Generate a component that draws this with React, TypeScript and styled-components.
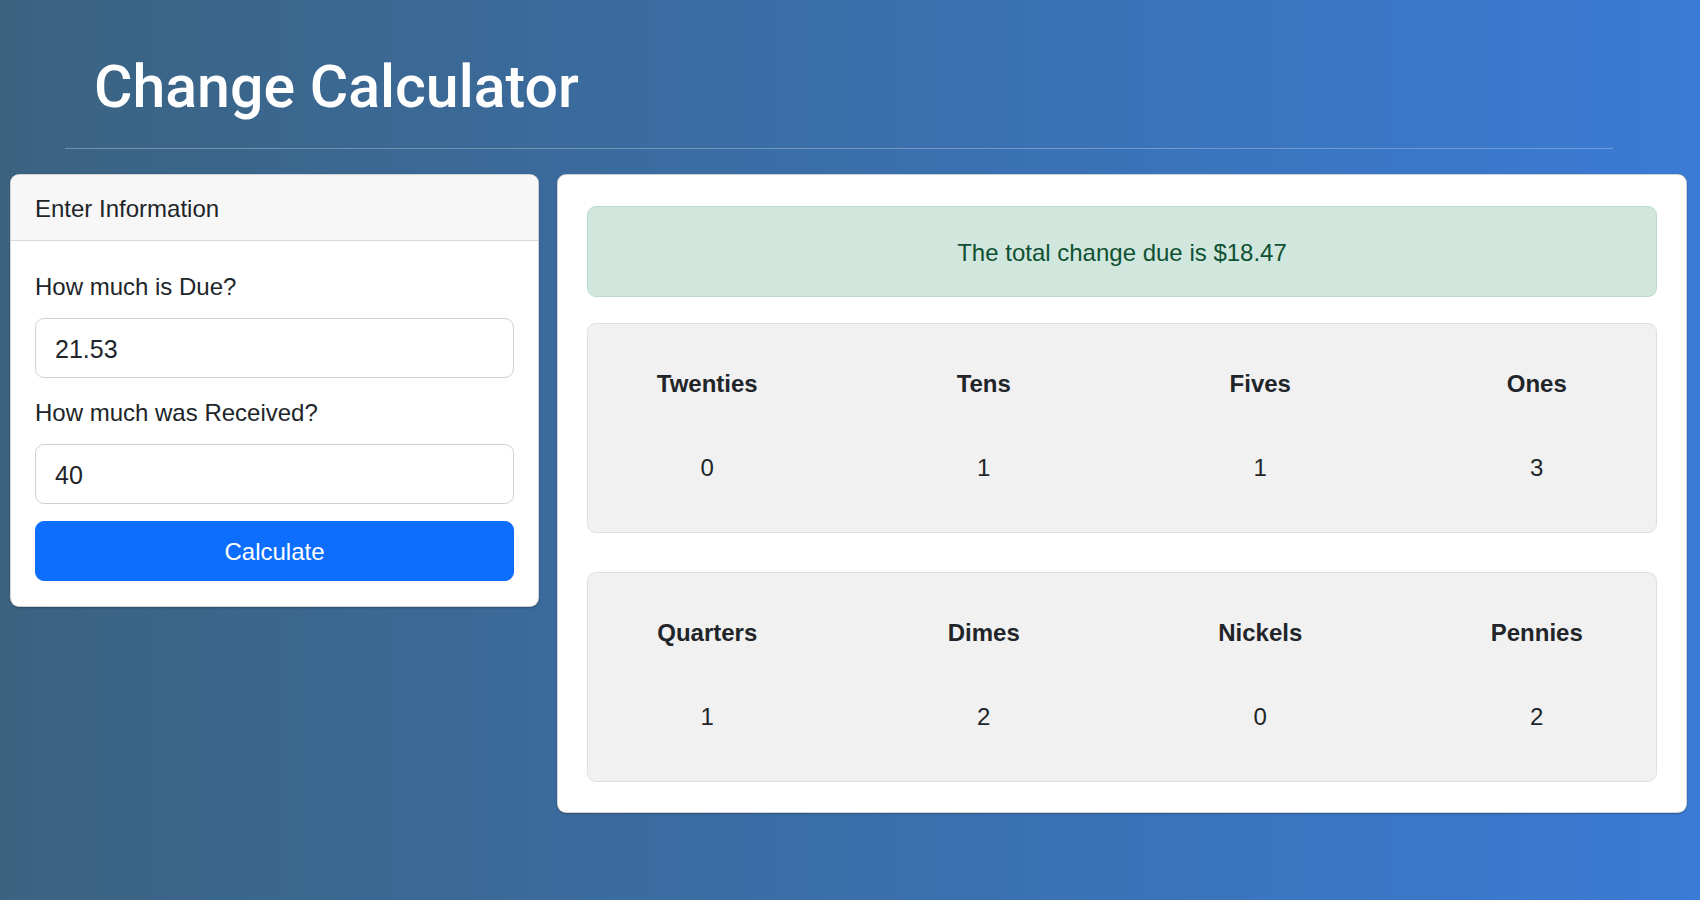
import styled, { createGlobalStyle } from "styled-components";

const GlobalStyle = createGlobalStyle`
  html, body {
    margin: 0;
    padding: 0;
  }
  body {
    min-height: 100vh;
    background: linear-gradient(to right, #3b6380, #3a7bd5);
    font-family: "Liberation Sans", Arial, sans-serif;
    color: #212529;
  }
  * {
    box-sizing: border-box;
  }
`;

const bills = [
  { label: "Twenties", count: 0 },
  { label: "Tens", count: 1 },
  { label: "Fives", count: 1 },
  { label: "Ones", count: 3 },
];

const coins = [
  { label: "Quarters", count: 1 },
  { label: "Dimes", count: 2 },
  { label: "Nickels", count: 0 },
  { label: "Pennies", count: 2 },
];

function CountBox({
  items,
  spaced,
}: {
  items: { label: string; count: number }[];
  spaced?: boolean;
}) {
  return (
    <Well $spaced={spaced}>
      <WellRow>
        {items.map((item) => (
          <WellCol key={item.label}>
            <Denom>{item.label}</Denom>
            <Count>{item.count}</Count>
          </WellCol>
        ))}
      </WellRow>
    </Well>
  );
}

export default function App() {
  return (
    <>
      <GlobalStyle />
      <Header>
        <Title>Change Calculator</Title>
        <Rule />
      </Header>

      <Main>
        <Card>
          <CardHeader>Enter Information</CardHeader>
          <CardBody>
            <Label htmlFor="due">How much is Due?</Label>
            <Input id="due" type="text" defaultValue="21.53" />
            <Label htmlFor="received">How much was Received?</Label>
            <Input id="received" type="text" defaultValue="40" />
            <CalcButton type="button">Calculate</CalcButton>
          </CardBody>
        </Card>

        <ResultCard>
          <Alert>The total change due is $18.47</Alert>
          <CountBox items={bills} />
          <CountBox items={coins} spaced />
        </ResultCard>
      </Main>
    </>
  );
}

const Header = styled.header`
  padding-top: 51px;
`;

const Title = styled.h1`
  margin: 0 0 0 94px;
  font-family: Roboto, "Liberation Sans", sans-serif;
  font-weight: 500;
  font-size: 59px;
  line-height: 72px;
  color: #fff;
`;

const Rule = styled.hr`
  margin: 25px 87px 0 65px;
  border: 0;
  border-top: 1px solid rgba(255, 255, 255, 0.28);
  height: 0;
`;

const Main = styled.main`
  display: grid;
  grid-template-columns: 529px 1130px;
  gap: 18px;
  align-items: start;
  margin-top: 25px;
  padding-left: 10px;
`;

const Card = styled.section`
  background: #fff;
  border: 1px solid rgba(0, 0, 0, 0.175);
  border-radius: 9px;
  box-shadow: 0 1px 2px rgba(0, 0, 0, 0.25);
  overflow: hidden;
`;

const CardHeader = styled.div`
  padding: 16px 24px 13px;
  background: #f7f7f7;
  border-bottom: 1px solid #d8d8d8;
  font-size: 24px;
  line-height: 36px;
`;

const CardBody = styled.div`
  display: flex;
  flex-direction: column;
  padding: 28px 24px 25px;
`;

const Label = styled.label`
  display: block;
  font-size: 24px;
  line-height: 36px;
  margin-bottom: 13px;
`;

const Input = styled.input`
  display: block;
  width: 100%;
  height: 60px;
  margin-bottom: 17px;
  padding: 2px 19px 0;
  border: 1px solid #cfd2d6;
  border-radius: 9px;
  background: #fff;
  font-family: "Liberation Sans", Arial, sans-serif;
  font-size: 25px;
  color: #212529;
  outline: none;
`;

const CalcButton = styled.button`
  display: block;
  width: 100%;
  height: 60px;
  padding-top: 2px;
  border: 1px solid #0d6efd;
  border-radius: 9px;
  background: #0d6efd;
  color: #fff;
  font-family: "Liberation Sans", Arial, sans-serif;
  font-size: 24px;
  cursor: pointer;
`;

const ResultCard = styled(Card)`
  padding: 31px 29px 30px;
`;

const Alert = styled.div`
  padding: 28px 0 25px;
  margin-bottom: 26px;
  background: #d1e7dd;
  border: 1px solid #badbcc;
  border-radius: 9px;
  color: #0f5132;
  font-size: 24px;
  line-height: 36px;
  text-align: center;
`;

const Well = styled.div<{ $spaced?: boolean }>`
  margin-top: ${(p) => (p.$spaced ? "39px" : "0")};
  padding: 45px 0 46px;
  background: #f1f1f1;
  border: 1px solid #dfdfdf;
  border-radius: 9px;
`;

const WellRow = styled.div`
  display: grid;
  grid-template-columns: repeat(4, 1fr);
  margin: 0 -19px;
`;

const WellCol = styled.div`
  display: flex;
  flex-direction: column;
  align-items: center;
`;

const Denom = styled.div`
  font-size: 24px;
  font-weight: 700;
  line-height: 29px;
  margin-bottom: 52px;
`;

const Count = styled.div`
  font-size: 24px;
  line-height: 36px;
`;
